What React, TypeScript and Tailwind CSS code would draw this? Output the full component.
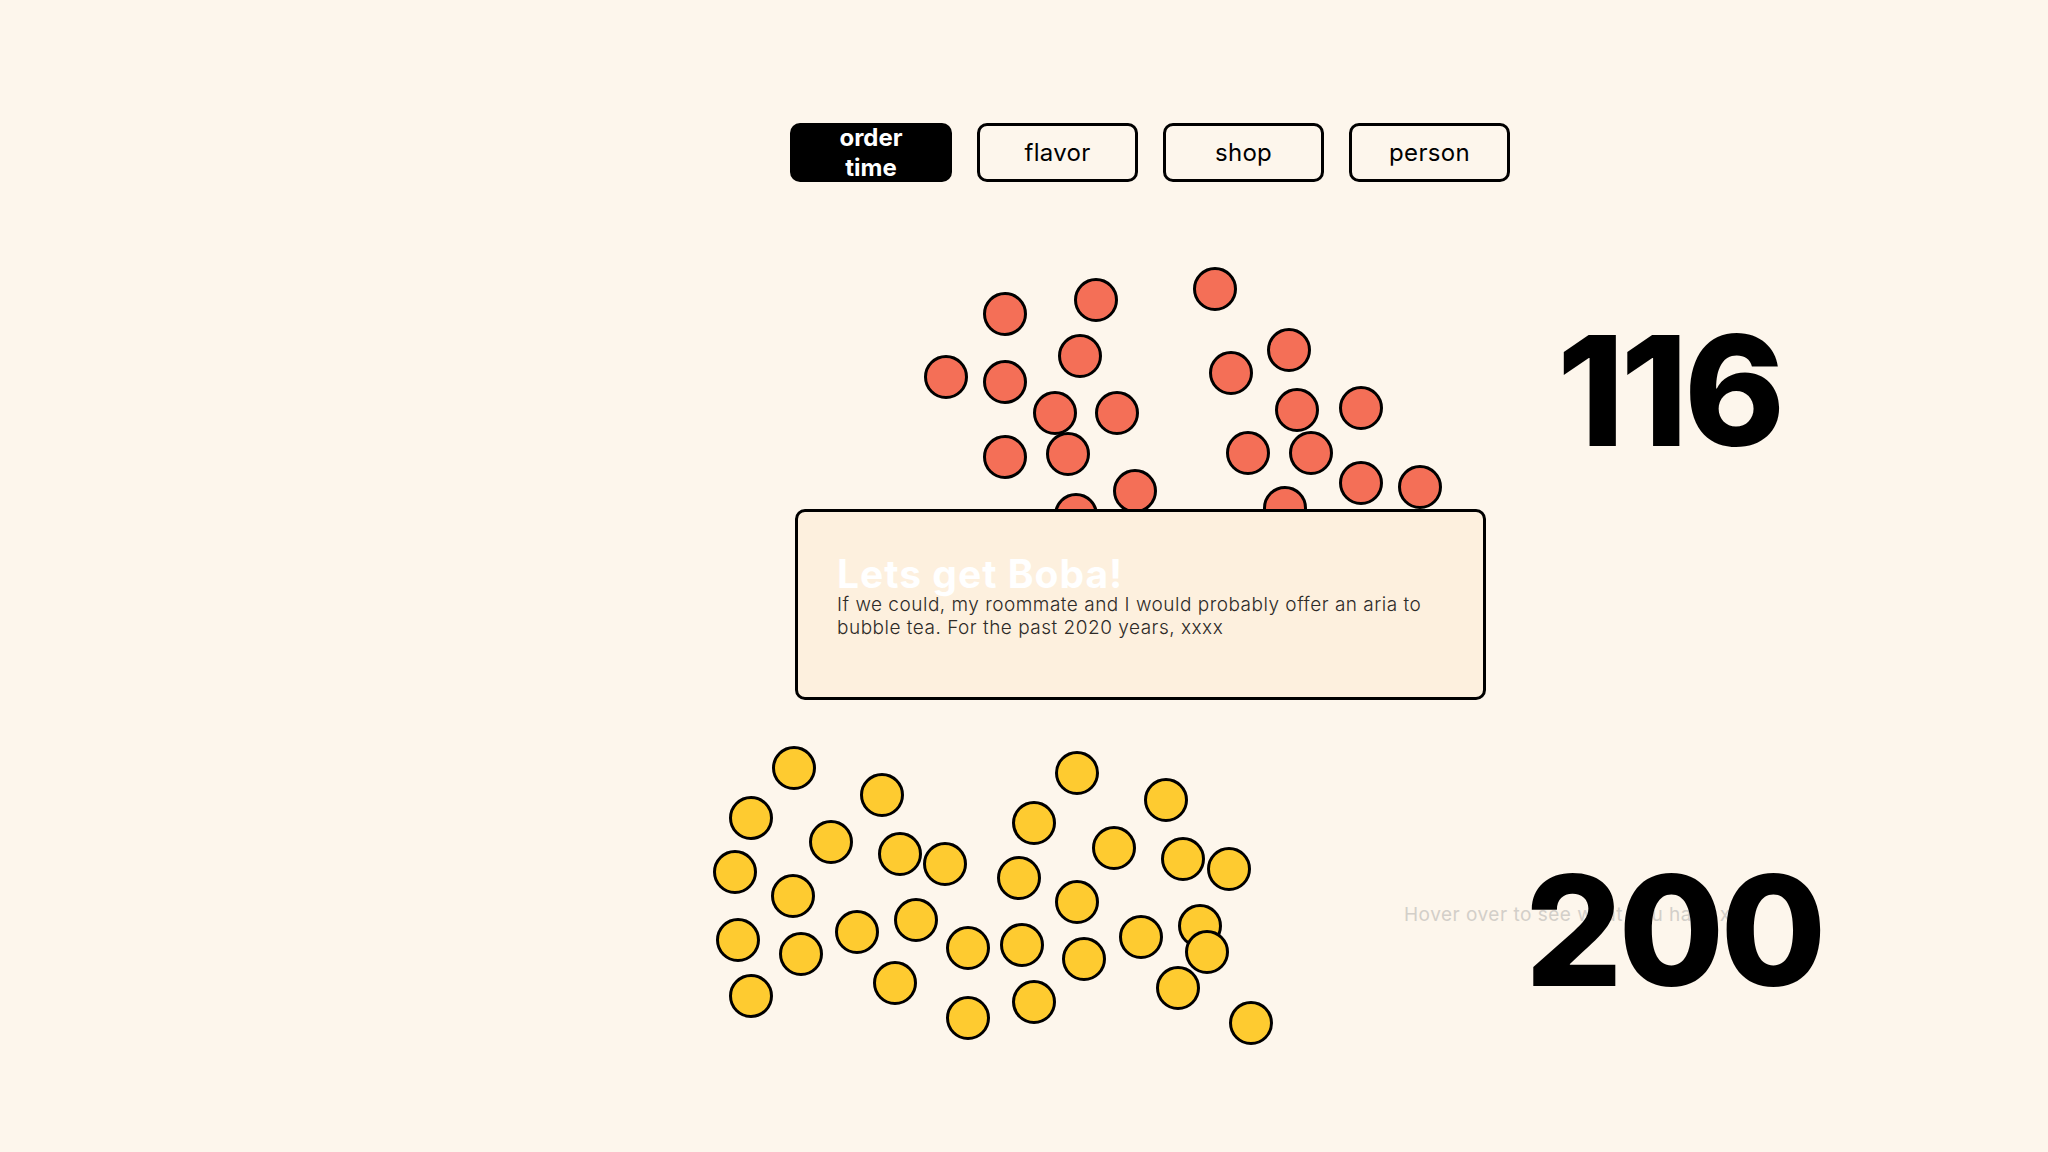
import React from "react";

const RED: [number, number][] = [
  [215, 132], [306, 118], [425, 107], [290, 174], [499, 168], [156, 195], [215, 200],
  [441, 191], [265, 231], [327, 231], [507, 228], [571, 226], [215, 275], [278, 272],
  [458, 271], [521, 271], [571, 301], [630, 305], [345, 309], [286, 333], [495, 326],
];

const YELLOW: [number, number][] = [
  [94, 68], [182, 95], [377, 73], [466, 100], [51, 118], [131, 142], [200, 154], [245, 164],
  [334, 123], [414, 148], [483, 159], [529, 169], [35, 172], [319, 178], [93, 196], [377, 202],
  [38, 240], [101, 254], [157, 232], [216, 220], [268, 248], [322, 245], [384, 259], [441, 237],
  [500, 226], [507, 252], [51, 296], [195, 283], [268, 318], [334, 302], [478, 288], [551, 323],
];

function Bubbles({ pts, fill, w, h }: { pts: [number, number][]; fill: string; w: number; h: number }) {
  return (
    <svg width={w} height={h} viewBox={`0 0 ${w} ${h}`} className="shrink-0 block">
      {pts.map(([x, y], i) => (
        <circle key={i} cx={x} cy={y} r={20.5} fill={fill} stroke="#000" strokeWidth={3} />
      ))}
    </svg>
  );
}

const tabs = ["flavor", "shop", "person"];

export default function App() {
  return (
    <div
      className="w-[2048px] h-[1152px] bg-[#fdf6ec] overflow-hidden flex flex-col"
      style={{ fontFamily: "Inter, 'Noto Sans', sans-serif" }}
    >
      {/* nav */}
      <div className="flex gap-[25px] pt-[123px] pl-[790px]">
        <button className="w-[162px] h-[59px] rounded-[10px] bg-black text-white font-bold text-[24px] leading-[30px] flex flex-col items-center justify-center">
          <span>order</span>
          <span>time</span>
        </button>
        {tabs.map((t) => (
          <button
            key={t}
            className="w-[161px] h-[59px] rounded-[10px] border-[3px] border-black text-black text-[24px] tracking-[0.3px] flex items-center justify-center"
          >
            {t}
          </button>
        ))}
      </div>

      {/* top chart */}
      <div className="flex items-start pl-[790px]">
        <Bubbles pts={RED} fill="#f46f57" w={660} h={358} />
        <div className="ml-[107px] mt-[132px] text-[153px] leading-none font-extrabold text-black tracking-[-4px]">
          116
        </div>
      </div>

      {/* card */}
      <div className="relative z-10 ml-[795px] -mt-[31px] w-[691px] h-[191px] rounded-[10px] border-[3px] border-black bg-[#fdf0de] pl-[39px] pt-[42px]">
        <h1 className="text-[39px] leading-none font-bold text-white tracking-[1px]">Lets get Boba!</h1>
        <p className="max-w-[605px] text-[19px] leading-[23px] text-[#2e2b28] font-light tracking-[0.5px]">
          If we could, my roommate and I would probably offer an aria to bubble tea. For the past 2020 years, xxxx
        </p>
      </div>

      {/* bottom chart */}
      <div className="flex items-start pl-[700px]">
        <Bubbles pts={YELLOW} fill="#fecb30" w={580} h={360} />
        <div className="relative ml-[124px] mt-[203px]">
          <p className="text-[19px] leading-[23px] text-[#d3cfc9] whitespace-nowrap tracking-[0.5px]">
            Hover over to see what you have xxx
          </p>
          <div className="absolute left-[121px] top-[-49px] text-[153px] leading-none font-extrabold text-black tracking-[-4px]">
            200
          </div>
        </div>
      </div>
    </div>
  );
}
